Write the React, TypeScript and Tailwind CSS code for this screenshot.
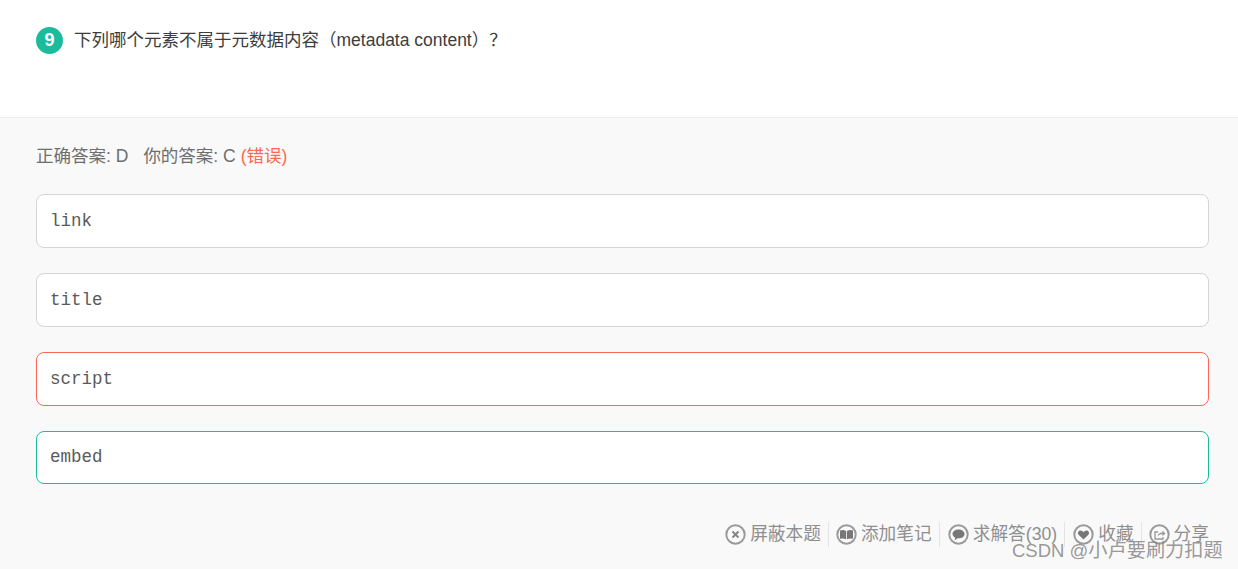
import React from 'react';

const font = "font-['Liberation_Sans','Noto_Sans_CJK_SC',sans-serif]";

const options = [
  { label: 'link', border: 'border-[#d5d5d5]', height: 'h-[54px]' },
  { label: 'title', border: 'border-[#d5d5d5]', height: 'h-[54px]' },
  { label: 'script', border: 'border-[#fa6a50]', height: 'h-[54px]' },
  { label: 'embed', border: 'border-[#1abc9c]', height: 'h-[53px]' },
];

function Ring({ children }: { children: React.ReactNode }) {
  return (
    <svg width="21" height="21" viewBox="0 0 21 21" className="shrink-0">
      <circle cx="10.5" cy="10.5" r="9.2" fill="#fafafa" stroke="#9a9a9a" strokeWidth="2" />
      {children}
    </svg>
  );
}

const actions = [
  {
    label: '屏蔽本题',
    pad: 'pr-[7px]',
    icon: <path d="M7.5 7.5l6 6M13.5 7.5l-6 6" stroke="#858585" strokeWidth="2" fill="none" />,
  },
  {
    label: '添加笔记',
    pad: 'px-[7px]',
    icon: (
      <g>
        <path d="M4 6.5q3.4-1 6.1.6v8.2q-2.7-1.4-6.1-.6z" fill="#777777" />
        <path d="M17 6.5q-3.4-1-6.1.6v8.2q2.7-1.4 6.1-.6z" fill="#777777" />
      </g>
    ),
  },
  {
    label: '求解答(30)',
    pad: 'pl-[8px] pr-[7px]',
    icon: <path d="M10.5 5.5c3.3 0 6 1.9 6 4.4s-2.7 4.4-6 4.4h-.9l-3 1.9.6-2.6c-1.6-.8-2.7-2.2-2.700-3.700 0-2.500 2.700-4.400 6-4.400z" fill="#777777" />,
  },
  {
    label: '收藏',
    pad: 'pl-[8px] pr-[7px]',
    icon: <path d="M10.5 15.5l-4.9-4.8c-1.4-1.5-.4-4.2 1.8-4.2 1.3 0 2.4.8 3.1 1.8.7-1 1.8-1.8 3.1-1.8 2.2 0 3.2 2.7 1.8 4.2z" fill="#777777" />,
  },
  {
    label: '分享',
    pad: 'pl-[7px]',
    icon: (
      <g fill="none" stroke="#999999" strokeWidth="1.3">
        <path d="M14 13v2H6V8h3" />
        <path d="M8.5 12.5c.3-2.6 2.2-4 5-4V6.500l3 2.900-3 2.900v-2c-2.100 0-3.700.6-5 2.200z" fill="#999999" stroke="none" />
      </g>
    ),
  },
];

export default function App() {
  return (
    <div className={`relative h-[569px] w-[1238px] overflow-hidden bg-[#f9f9f9] ${font}`}>
      <div className="h-[118px] border-b border-[#eeeeee] bg-white pl-[36px] pt-[27px]">
        <div className="flex items-center gap-[11px]">
          <span className="flex h-[27px] w-[27px] items-center justify-center rounded-full bg-[#1abc9c] text-[18px] font-bold text-white">
            9
          </span>
          <span className="text-[17.5px] leading-[27px] text-[#3d3d3d]">
            下列哪个元素不属于元数据内容（metadata content）？
          </span>
        </div>
      </div>

      <div className="pl-[36px] pr-[29px] pt-[26px]">
        <div className="text-[17.5px] leading-[24px] text-[#6e6e6e]">
          正确答案: D<span className="ml-[15px]">你的答案: C</span>{' '}
          <span className="text-[#fa6a50]">(错误)</span>
        </div>

        <div className="mt-[26px] flex flex-col gap-[25px]">
          {options.map((o) => (
            <div
              key={o.label}
              className={`flex items-center rounded-[8px] border bg-white pl-[13px] ${o.border} ${o.height}`}
            >
              <span className="font-['Liberation_Mono',monospace] text-[17.5px] text-[#5a5a5a]">{o.label}</span>
            </div>
          ))}
        </div>

        <div className="mt-[37px] flex h-[26px] items-center justify-end">
          {actions.map((a, i) => (
            <div
              key={a.label}
              className={`flex h-[25px] items-center gap-[4px] ${a.pad} ${i < actions.length - 1 ? 'border-r border-[#e4e4e4]' : ''}`}
            >
              <Ring>{a.icon}</Ring>
              <span className="text-[17.7px] text-[#8f8f8f]">{a.label}</span>
            </div>
          ))}
        </div>
      </div>

      <div className="absolute left-[1012px] top-[538px] whitespace-nowrap text-[19.2px] leading-[26px] text-[#8c8c8c]/90">
        <span className="text-[18.5px]">CSDN @</span>小卢要刷力扣题
      </div>
    </div>
  );
}
